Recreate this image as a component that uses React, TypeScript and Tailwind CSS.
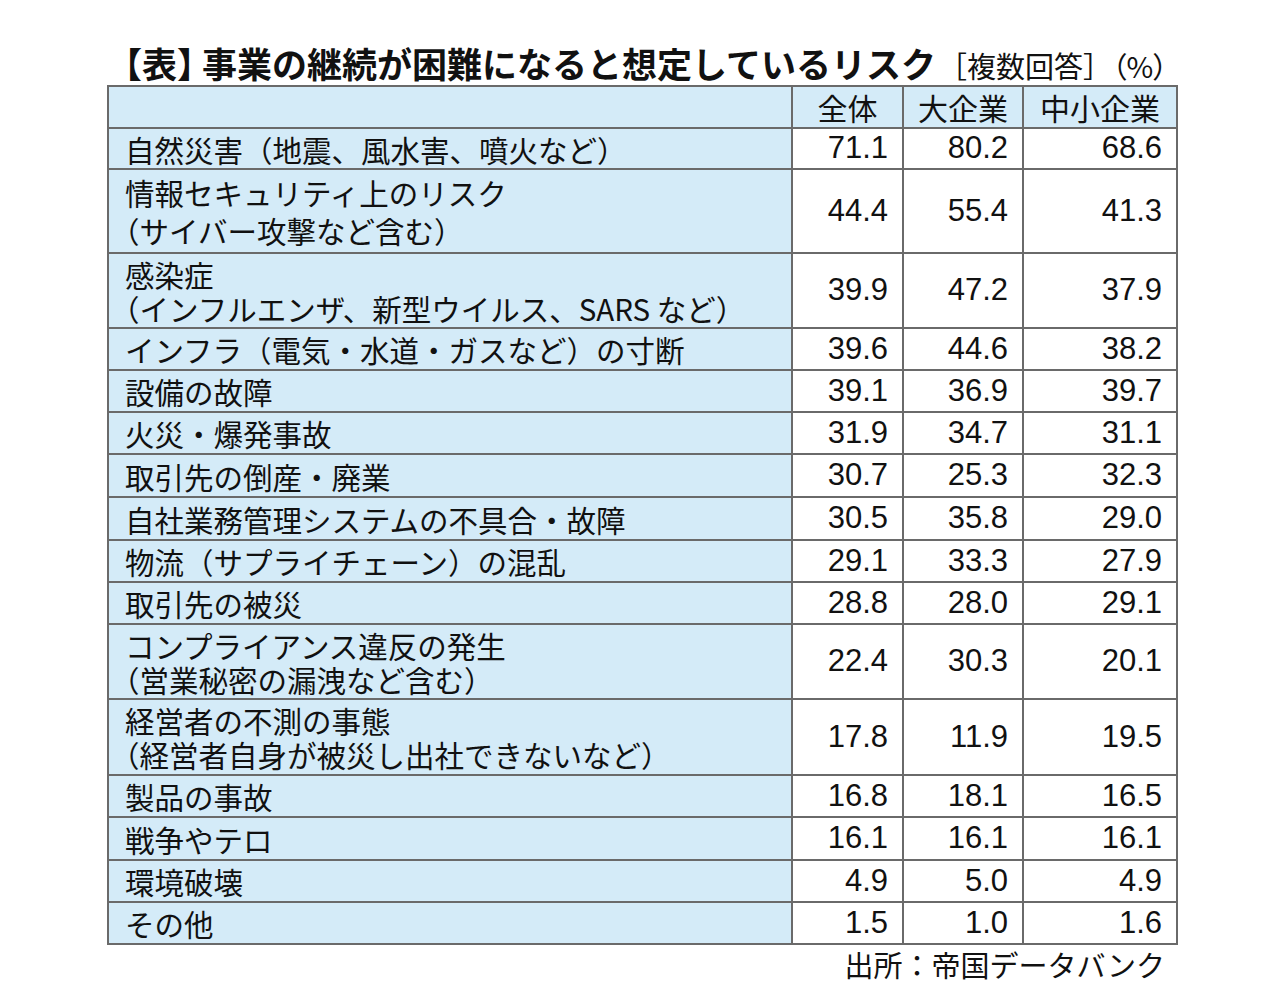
import React from "react";

type Row = { label: string[]; v: string[]; h: string; lh: string };

const rows: Row[] = [
  { label: ["自然災害（地震、風水害、噴火など）"], v: ["71.1", "80.2", "68.6"], h: "h-[39px]", lh: "leading-[34px]" },
  { label: ["情報セキュリティ上のリスク", "（サイバー攻撃など含む）"], v: ["44.4", "55.4", "41.3"], h: "h-[82px]", lh: "leading-[38px]" },
  { label: ["感染症", "（インフルエンザ、新型ウイルス、SARS など）"], v: ["39.9", "47.2", "37.9"], h: "h-[73px]", lh: "leading-[34px]" },
  { label: ["インフラ（電気・水道・ガスなど）の寸断"], v: ["39.6", "44.6", "38.2"], h: "h-[40px]", lh: "leading-[34px]" },
  { label: ["設備の故障"], v: ["39.1", "36.9", "39.7"], h: "h-[40px]", lh: "leading-[34px]" },
  { label: ["火災・爆発事故"], v: ["31.9", "34.7", "31.1"], h: "h-[40px]", lh: "leading-[34px]" },
  { label: ["取引先の倒産・廃業"], v: ["30.7", "25.3", "32.3"], h: "h-[41px]", lh: "leading-[34px]" },
  { label: ["自社業務管理システムの不具合・故障"], v: ["30.5", "35.8", "29.0"], h: "h-[41px]", lh: "leading-[34px]" },
  { label: ["物流（サプライチェーン）の混乱"], v: ["29.1", "33.3", "27.9"], h: "h-[40px]", lh: "leading-[34px]" },
  { label: ["取引先の被災"], v: ["28.8", "28.0", "29.1"], h: "h-[40px]", lh: "leading-[34px]" },
  { label: ["コンプライアンス違反の発生", "（営業秘密の漏洩など含む）"], v: ["22.4", "30.3", "20.1"], h: "h-[73px]", lh: "leading-[34px]" },
  { label: ["経営者の不測の事態", "（経営者自身が被災し出社できないなど）"], v: ["17.8", "11.9", "19.5"], h: "h-[74px]", lh: "leading-[34px]" },
  { label: ["製品の事故"], v: ["16.8", "18.1", "16.5"], h: "h-[40px]", lh: "leading-[34px]" },
  { label: ["戦争やテロ"], v: ["16.1", "16.1", "16.1"], h: "h-[41px]", lh: "leading-[34px]" },
  { label: ["環境破壊"], v: ["4.9", "5.0", "4.9"], h: "h-[40px]", lh: "leading-[34px]" },
  { label: ["その他"], v: ["1.5", "1.0", "1.6"], h: "h-[40px]", lh: "leading-[34px]" },
];

const jp = "font-['Noto_Sans_CJK_JP',sans-serif]";
const num = "font-['Liberation_Sans',Arial,sans-serif]";

function Line({ text }: { text: string }) {
  if (text.startsWith("（")) {
    return (
      <div className="whitespace-nowrap">
        <span className="ml-[-15px]">（</span>
        {text.slice(1)}
      </div>
    );
  }
  return <div className="whitespace-nowrap">{text}</div>;
}

export default function App() {
  return (
    <div className={`w-[1267px] h-[987px] bg-white text-[#111] ${jp}`}>
      <div className="pl-[107px] pt-[45px]">
        <div className="flex items-baseline h-[34px] leading-none w-[1071px]">
          <span className="text-[35px] font-bold whitespace-nowrap">
            <span>【表</span>
            <span className="mr-[-10px]">】</span>
            事業の継続が困難になると想定しているリスク
          </span>
          <span className="ml-[2px] text-[29px] whitespace-nowrap">
            ［複数回答］<span className="[font-feature-settings:'palt']">（%）</span>
          </span>
        </div>
        <div className="mt-[6px] w-[1071px] grid grid-cols-[682px_109px_118px_152px] gap-[2px] bg-[#6a6a6a] p-[2px]">
          <div className="h-[40px] bg-[#d4ebf8]" />
          <div className="h-[40px] bg-[#d4ebf8] flex items-center justify-center text-[30px]">全体</div>
          <div className="h-[40px] bg-[#d4ebf8] flex items-center justify-center text-[30px]">大企業</div>
          <div className="h-[40px] bg-[#d4ebf8] flex items-center justify-center text-[30px]">中小企業</div>
          {rows.map((r, i) => (
            <React.Fragment key={i}>
              <div className={`${r.h} ${r.lh} bg-[#d4ebf8] flex flex-col justify-center pl-[16px] text-[29.5px]`}>
                {r.label.map((t, j) => (
                  <Line key={j} text={t} />
                ))}
              </div>
              {r.v.map((v, j) => (
                <div key={j} className={`${r.h} bg-white flex items-center justify-end pr-[14px] text-[31px] ${num}`}>
                  {v}
                </div>
              ))}
            </React.Fragment>
          ))}
        </div>
        <div className="w-[1071px] flex justify-end pr-[13px] mt-[1px] text-[29px] leading-[36px]">出所：帝国データバンク</div>
      </div>
    </div>
  );
}
